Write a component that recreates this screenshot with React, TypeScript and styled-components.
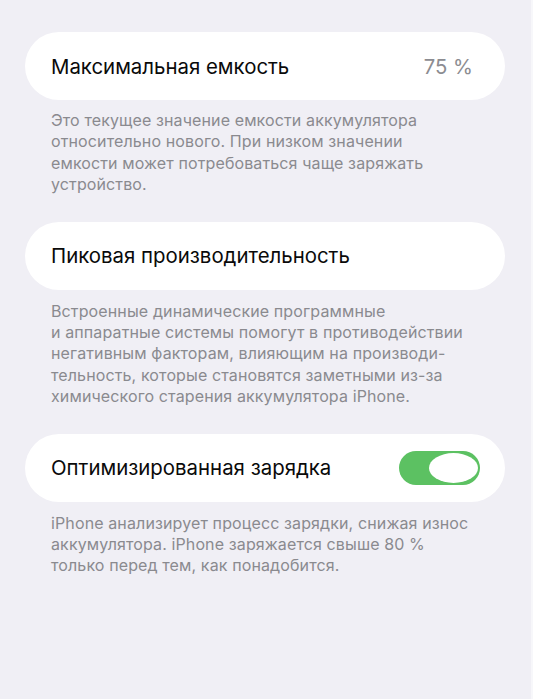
import React from "react";
import styled, { createGlobalStyle } from "styled-components";

const Global = createGlobalStyle`
  html, body {
    margin: 0;
    padding: 0;
    background: #f0eff5;
  }
  body {
    font-family: Inter, "Noto Sans", "Liberation Sans", sans-serif;
    -webkit-font-smoothing: antialiased;
  }
`;

const Page = styled.div`
  min-height: 699px;
  box-sizing: border-box;
  padding: 32px 26px 0 25px;
  display: flex;
  flex-direction: column;
  gap: 26px;
  background: #f0eff5;
  border-right: 2px solid #f7f7fa;
`;

const Section = styled.section`
  display: flex;
  flex-direction: column;
`;

const Card = styled.div`
  height: 68px;
  box-sizing: border-box;
  background: #ffffff;
  border-radius: 34px;
  padding: 0 25px 0 26px;
  display: flex;
  align-items: center;
  justify-content: space-between;
`;

const Title = styled.span`
  font-size: 20.4px;
  color: #0a0a0a;
`;

const Value = styled.span`
  font-size: 20.3px;
  color: #8c8c91;
  margin-right: 7px;
`;

const Footnote = styled.p<{ $top: number }>`
  margin: ${(p) => p.$top}px 0 0 26px;
  font-size: 16px;
  line-height: 21.4px;
  color: #8a8a8f;
  letter-spacing: 0.12px;
`;

const Switch = styled.div<{ $on: boolean }>`
  width: 81px;
  height: 34px;
  box-sizing: border-box;
  border-radius: 17px;
  background: ${(p) => (p.$on ? "#5cc162" : "#e4e4ea")};
  padding: 2px;
  display: flex;
  justify-content: ${(p) => (p.$on ? "flex-end" : "flex-start")};
`;

const Knob = styled.div`
  width: 49px;
  height: 30px;
  border-radius: 50%;
  background: #ffffff;
`;

export default function App() {
  return (
    <>
      <Global />
      <Page>
        <Section>
          <Card>
            <Title>Максимальная емкость</Title>
            <Value>75 %</Value>
          </Card>
          <Footnote $top={10}>
            Это текущее значение емкости аккумулятора
            <br />
            относительно нового. При низком значении
            <br />
            емкости может потребоваться чаще заряжать
            <br />
            устройство.
          </Footnote>
        </Section>
        <Section>
          <Card>
            <Title>Пиковая производительность</Title>
          </Card>
          <Footnote $top={11}>
            Встроенные динамические программные
            <br />
            и аппаратные системы помогут в противодействии
            <br />
            негативным факторам, влияющим на производи-
            <br />
            тельность, которые становятся заметными из-за
            <br />
            химического старения аккумулятора iPhone.
          </Footnote>
        </Section>
        <Section>
          <Card>
            <Title>Оптимизированная зарядка</Title>
            <Switch $on role="switch" aria-checked="true">
              <Knob />
            </Switch>
          </Card>
          <Footnote $top={11}>
            iPhone анализирует процесс зарядки, снижая износ
            <br />
            аккумулятора. iPhone заряжается свыше 80 %
            <br />
            только перед тем, как понадобится.
          </Footnote>
        </Section>
      </Page>
    </>
  );
}
